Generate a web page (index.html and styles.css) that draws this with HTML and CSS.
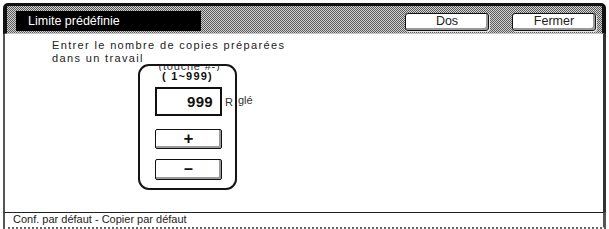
FILE: index.html
```html
<!DOCTYPE html>
<html lang="fr">
<head>
<meta charset="utf-8">
<link rel="stylesheet" href="styles.css">
</head>
<body>
<div class="panel">
  <div class="header">
    <div class="title">Limite prédéfinie</div>
    <div class="actions">
      <div class="hbtn">Dos</div>
      <div class="hbtn">Fermer</div>
    </div>
  </div>
  <div class="content">
    <p class="prompt">Entrer le nombre de copies préparées<br>dans un travail</p>
    <span class="unit">glé</span>
    <div class="popup">
      <div class="clip"><span>(touche #-)</span></div>
      <div class="range">( 1~999)</div>
      <div class="row">
        <div class="display">999</div>
        <span class="r">R</span>
      </div>
      <div class="kbtn plus">+</div>
      <div class="kbtn minus">–</div>
    </div>
  </div>
  <div class="footer">Conf. par défaut - Copier par défaut</div>
</div>
</body>
</html>
```

FILE: styles.css
```css
html, body {
  margin: 0;
  padding: 0;
  background: #fff;
}
body {
  font-family: "Liberation Sans", Arial, sans-serif;
  color: #111;
}
.panel {
  margin: 3px 3px 0 3px;
  width: 603px;
  height: 226px;
  display: flex;
  flex-direction: column;
}
.header {
  box-sizing: border-box;
  height: 31px;
  border-top: 3px solid #111;
  border-left: 4px solid #111;
  border-right: 4px solid #111;
  border-radius: 5px 5px 0 0;
  background-color: #999;
  background-image: repeating-conic-gradient(#5a5a5a 0 25%, #d2d2d2 0 50%);
  background-size: 2px 2px;
  padding: 5px 6px 3px 9px;
  display: flex;
  align-items: flex-start;
  border-bottom: 1px dotted #bbb;
}
.title {
  width: 185px;
  height: 20px;
  background: #000;
  color: #fff;
  font-size: 12.5px;
  line-height: 20px;
  padding-left: 12px;
  box-sizing: border-box;
}
.actions {
  margin-left: auto;
  display: flex;
  gap: 23px;
  margin-top: 2px;
}
.hbtn {
  box-sizing: border-box;
  width: 84px;
  height: 18px;
  background: #fff;
  border: 1.5px solid #111;
  border-radius: 3px;
  box-shadow: inset -2px -2px 0 #9a9a9a, 1px 1px 0 #e8e8e8;
  font-size: 12.5px;
  line-height: 15px;
  text-align: center;
  color: #222;
}
.content {
  position: relative;
  box-sizing: border-box;
  height: 178px;
  border-left: 2px solid #555;
  border-right: 3px solid #333;
  background: #fff;
}
.prompt {
  margin: 0;
  padding: 5px 0 0 47px;
  font-size: 11px;
  line-height: 13px;
  letter-spacing: 1.35px;
  color: #222;
}
.unit {
  position: absolute;
  left: 233px;
  top: 60px;
  font-size: 11px;
  color: #333;
}
.popup {
  position: absolute;
  left: 133px;
  top: 30px;
  box-sizing: border-box;
  width: 99px;
  height: 126px;
  border: 2.5px solid #151515;
  border-radius: 11px;
  background: #fff;
}
.clip {
  height: 5px;
  overflow: hidden;
  text-align: center;
  padding-left: 4px;
}
.clip span {
  display: block;
  margin-top: -5px;
  font-size: 11px;
  line-height: 11px;
  letter-spacing: 0.8px;
  color: #333;
}
.range {
  margin-top: 0;
  text-align: center;
  font-weight: bold;
  font-size: 11px;
  line-height: 10px;
  letter-spacing: 1.2px;
  color: #111;
}
.row {
  margin-top: 6px;
  margin-left: 15px;
  display: flex;
  align-items: center;
}
.display {
  box-sizing: border-box;
  width: 67px;
  height: 29px;
  border: 2px solid #111;
  font-weight: bold;
  font-size: 15px;
  line-height: 25px;
  text-align: right;
  padding-right: 7px;
  letter-spacing: 0.3px;
  color: #111;
}
.r {
  margin-left: 3px;
  font-size: 11px;
  color: #333;
}
.kbtn {
  box-sizing: border-box;
  width: 67px;
  margin-left: 15px;
  border: 1.5px solid #111;
  border-radius: 2px;
  box-shadow: inset -2px -2px 0 #9a9a9a;
  text-align: center;
  font-weight: bold;
  color: #111;
}
.plus {
  margin-top: 13px;
  height: 20px;
  font-size: 17px;
  line-height: 17px;
}
.minus {
  margin-top: 10px;
  height: 21px;
  font-size: 16px;
  line-height: 17px;
}
.footer {
  box-sizing: border-box;
  height: 17px;
  border-top: 1.5px solid #222;
  border-left: 2px solid #555;
  border-right: 3px solid #555;
  border-bottom: 2px dotted #666;
  font-size: 11px;
  line-height: 13px;
  padding-left: 8px;
  color: #222;
}
```
